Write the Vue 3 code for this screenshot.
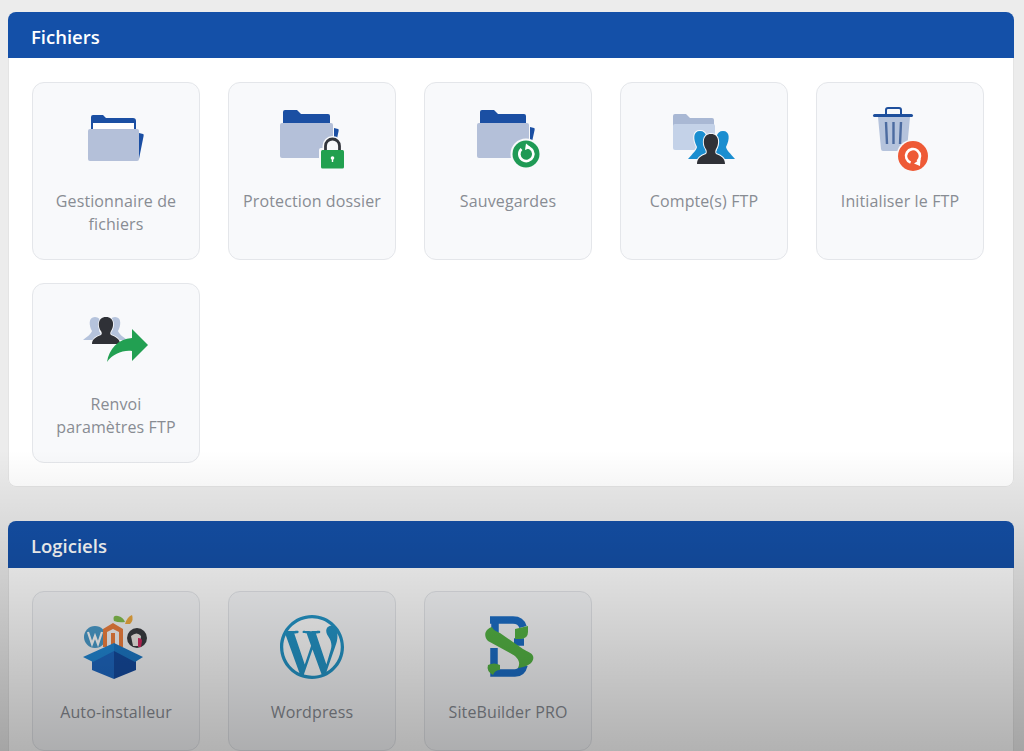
<template>
  <div class="page">
    <section class="panel">
      <h2 class="panel-title">Fichiers</h2>
      <div class="tiles">
        <a class="tile">
          <svg class="icon" viewBox="0 0 80 64">
            <path d="M15 16q0-2 2-2h10l3 3h27q3 0 3 3v12H15z" fill="#1b4fa3" />
            <rect x="17" y="22" width="41" height="8" fill="#fff" />
            <path d="M63 32l4 1q1 0 .6 2L63 58z" fill="#1b4fa3" />
            <rect x="12" y="28" width="51" height="32" rx="2" fill="#b4c0d9" />
          </svg>
          <span class="label">Gestionnaire de fichiers</span>
        </a>
        <a class="tile">
          <svg class="icon" viewBox="0 0 80 64">
            <path d="M11 11q0-2 2-2h12l4 4h27q2 0 2 2v10H11z" fill="#1b4fa3" />
            <path d="M62 27l4 1q1 0 .6 2L62 52z" fill="#1b4fa3" />
            <rect x="8" y="22" width="53" height="35" rx="2" fill="#b4c0d9" />
            <rect x="47" y="47" width="27" height="23" rx="2" fill="#f8f9fb" />
            <path d="M52 49v-4a8 8 0 0 1 17 0v4z" fill="#f8f9fb" stroke="#f8f9fb" stroke-width="3" />
            <path d="M53.500 50v-5a7 7 0 0 1 14 0v5" fill="none" stroke="#33363c" stroke-width="2.800" />
            <rect x="49" y="49" width="23" height="18.500" rx="1.500" fill="#21a04f" />
            <circle cx="60.500" cy="57" r="1.800" fill="#fff" />
            <rect x="59.800" y="57" width="1.400" height="4" fill="#fff" />
          </svg>
          <span class="label">Protection dossier</span>
        </a>
        <a class="tile">
          <svg class="icon" viewBox="0 0 80 64">
            <path d="M12 11q0-2 2-2h12l4 4h26q2 0 2 2v10H12z" fill="#1b4fa3" />
            <path d="M62 26l4 1q1 0 .6 2L62 50z" fill="#1b4fa3" />
            <rect x="9" y="22" width="52" height="35" rx="2" fill="#b4c0d9" />
            <circle cx="58" cy="53" r="15.500" fill="#f8f9fb" />
            <circle cx="58" cy="53" r="13.500" fill="#1f9a55" />
            <path d="M53.500 48a7 7 0 1 0 6-1.800" fill="none" stroke="#fff" stroke-width="2.600" />
            <path d="M58 42.500l5 4-6 2.500z" fill="#fff" />
          </svg>
          <span class="label">Sauvegardes</span>
        </a>
        <a class="tile">
          <svg class="icon" viewBox="0 0 80 64">
            <path d="M9 15q0-2 2-2h11l4 4h22q2 0 2 2v8H9z" fill="#a9b8d4" />
            <rect x="9" y="23" width="42" height="26" rx="2" fill="#c4d2e8" />
            <path d="M24 58C29 52 32 50 33 46 29 38 29 30 36 30 43 30 44 38 41 46L46 58Z" fill="#1a8ed0" stroke="#f8f9fb" stroke-width="2" paint-order="stroke" />
            <path d="M71 58C66 52 63 50 62 46 66 38 66 30 59 30 52 30 51 38 54 46L49 58Z" fill="#1a8ed0" stroke="#f8f9fb" stroke-width="2" paint-order="stroke" />
            <path d="M33 63C33 57 37 55 42 53 43 52 43 50 42 48 39 44 38 33 47 33 56 33 55 44 52 48 51 50 51 52 52 53 57 55 61 57 61 63Z" fill="#2f3137" stroke="#f8f9fb" stroke-width="2" paint-order="stroke" />
          </svg>
          <span class="label">Compte(s) FTP</span>
        </a>
        <a class="tile">
          <svg class="icon" viewBox="0 0 80 64">
            <path d="M18 16l3 32q.2 2 2 2h22q2 0 2-2l3-32z" fill="#b5c3dc" />
            <rect x="13" y="13" width="40" height="3" rx="1.500" fill="#1e4f9c" />
            <path d="M26 13V9q0-2 2-2h11q2 0 2 2v4" fill="none" stroke="#1e4f9c" stroke-width="2" />
            <path d="M26 21l1 22M33.500 21v22M41 21l-1 22" fill="none" stroke="#4c6ba0" stroke-width="2.400" />
            <circle cx="53" cy="55" r="16.500" fill="#f8f9fb" />
            <circle cx="53" cy="55" r="15" fill="#ee5a36" />
            <path d="M50.600 61.600A7 7 0 1 1 57.500 60.400" fill="none" stroke="#fff" stroke-width="2.600" />
            <path d="M60.500 58l-.5 7-6-2.500z" fill="#fff" />
          </svg>
          <span class="label">Initialiser le FTP</span>
        </a>
        <a class="tile tile-tall">
          <svg class="icon" viewBox="0 0 80 64">
            <path d="M7 37C12 33 15 31 16 28 13 23 12 14 19 14 26 14 26 23 23 28L29 37Z" fill="#b5c3dc" />
            <path d="M51 37C46 33 43 31 42 28 45 23 46 14 39 14 32 14 32 23 35 28L29 37Z" fill="#b5c3dc" />
            <path d="M16 41C16 36 20 34 25 32 26 31 26 30 25 28 22 24 21 14 30 14 39 14 38 24 35 28 34 30 34 31 35 32 40 34 44 36 44 41Z" fill="#2f3137" stroke="#f8f9fb" stroke-width="1.500" paint-order="stroke" />
            <path d="M31 59C33 46 42 36 56 35V26L72 42 56 58V48C46 47 37 51 31 59Z" fill="#22a052" />
          </svg>
          <span class="label">Renvoi<br />paramètres FTP</span>
        </a>
      </div>
    </section>

    <section class="panel panel-apps">
      <h2 class="panel-title">Logiciels</h2>
      <div class="tiles">
        <a class="tile tile-app">
          <svg class="icon" viewBox="0 0 80 64">
            <circle cx="19" cy="22" r="11" fill="#4a9ccc" />
            <path d="M12 17l4 12 3-8 3 8 4-12" fill="none" stroke="#fff" stroke-width="2.200" />
            <path d="M27 32V14l10-6 10 6v18h-4V17l-6-3-6 3v15z" fill="#f0803f" />
            <path d="M35 18h4v14h-4z" fill="#f0803f" />
            <path d="M38 6q-2-6 4-5 5 1 7 6-6 1-11-1z" fill="#84c04f" />
            <path d="M49 9q2-7 7-9 2 5-2 9z" fill="#f2ad40" />
            <circle cx="61" cy="23" r="10" fill="#3a3d42" />
            <path d="M55 21q6-5 10 0l-1 10h-7z" fill="#f1ece8" />
            <path d="M62 23q4 0 4 3l-1 6h-3z" fill="#d42a62" />
            <path d="M38 32L16 42V55L38 64Z" fill="#1e68c2" />
            <path d="M38 32L60 42V55L38 64Z" fill="#144a9e" />
            <path d="M38 28L7 42 17 47 38 36Z" fill="#2188d6" />
            <path d="M38 28L67 42 59 47 38 36Z" fill="#1c78c6" />
          </svg>
          <span class="label">Auto-installeur</span>
        </a>
        <a class="tile tile-app">
          <svg class="icon" viewBox="0 0 80 64">
            <g transform="translate(8 0) scale(2.667)">
              <circle cx="12" cy="12" r="11.500" fill="#fff" />
              <path fill="#2496c9" d="M21.469 6.825c.84 1.537 1.318 3.3 1.318 5.175 0 3.979-2.156 7.456-5.363 9.325l3.295-9.527c.615-1.54.82-2.771.82-3.864 0-.405-.026-.78-.07-1.11m-7.981.105c.647-.03 1.232-.105 1.232-.105.582-.075.514-.93-.067-.899 0 0-1.755.135-2.88.135-1.064 0-2.85-.15-2.85-.15-.585-.03-.661.855-.075.885 0 0 .54.061 1.125.09l1.68 4.605-2.37 7.08L5.354 6.9c.649-.03 1.234-.1 1.234-.1.585-.075.516-.93-.065-.896 0 0-1.746.138-2.874.138-.2 0-.438-.008-.69-.015C4.911 3.15 8.235 1.215 12 1.215c2.809 0 5.365 1.072 7.286 2.833-.046-.003-.091-.009-.141-.009-1.06 0-1.812.923-1.812 1.914 0 .89.513 1.643 1.06 2.531.411.72.89 1.643.89 2.977 0 .915-.354 1.994-.821 3.479l-1.075 3.585-3.9-11.61.001.014zM12 22.784c-1.059 0-2.081-.153-3.048-.437l3.237-9.406 3.315 9.087c.024.053.05.101.078.149-1.12.393-2.325.609-3.582.609M1.211 12c0-1.564.336-3.05.935-4.39L7.29 21.709C3.694 19.96 1.212 16.271 1.211 12M12 0C5.385 0 0 5.385 0 12s5.385 12 12 12 12-5.385 12-12S18.615 0 12 0" />
            </g>
          </svg>
          <span class="label">Wordpress</span>
        </a>
        <a class="tile tile-app">
          <svg class="icon" viewBox="0 0 80 64">
            <path d="M22 5H45Q53 5 55 12M27 5V18M26 33V58H47Q54 58 56 50M46 27H56" fill="none" stroke="#1c6fc8" stroke-width="7.500" />
            <path d="M47 14L60 11V17Q60 24 52 24H47Z" fill="#55b545" />
            <path d="M24 12C17 14 15 21 20 26L42 38C50 42 53 47 50 53 60 52 67 47 65 41 64 38 60 37 55 34L32 18C28 16 25 15 24 12Z" fill="#55b545" />
            <path d="M20 50Q26 47 32 50V55Q27 55 25 60 18 56 20 50Z" fill="#55b545" />
          </svg>
          <span class="label">SiteBuilder PRO</span>
        </a>
      </div>
    </section>

    <div class="shade"></div>
  </div>
</template>

<script setup>
</script>

<style>
body {
  background: #ececec;
}
</style>

<style scoped>
.page {
  position: relative;
  height: 751px;
  box-sizing: border-box;
  padding: 12px 10px 0 8px;
  overflow: hidden;
  background: #ececec;
  font-family: "Open Sans", "Liberation Sans", sans-serif;
}

.panel {
  margin-bottom: 34px;
  background: #fff;
  border-radius: 8px;
  box-shadow: 0 0 0 1px #e4e4e4 inset;
}

.panel-title {
  height: 46px;
  margin: 0;
  padding-left: 23px;
  background: #1450a8;
  border-radius: 8px 8px 0 0;
  color: #fff;
  font-size: 18.5px;
  font-weight: 600;
  line-height: 50px;
}

.panel-apps .panel-title {
  height: 47px;
}

.tiles {
  display: grid;
  grid-template-columns: repeat(5, 168px);
  gap: 23px 28px;
  padding: 24px;
}

.panel-apps .tiles {
  padding-top: 23px;
}

.tile {
  display: flex;
  flex-direction: column;
  align-items: center;
  box-sizing: border-box;
  min-height: 178px;
  padding: 18px 10px 0;
  background: #f8f9fb;
  border: 1px solid #e4e6ea;
  border-radius: 12px;
}

.tile-tall {
  min-height: 180px;
  padding-top: 19px;
}

.tile-app {
  min-height: 160px;
  padding-top: 23px;
}

.icon {
  display: block;
  flex: none;
  width: 80px;
  height: 64px;
  overflow: visible;
}

.label {
  margin-top: 25px;
  color: #888c93;
  font-size: 16px;
  letter-spacing: 0.12px;
  line-height: 23px;
  text-align: center;
}

.tile-tall .label {
  margin-top: 25.5px;
}

.tile-app .label {
  margin-top: 21.5px;
}

.shade {
  position: absolute;
  inset: 0;
  background: linear-gradient(to bottom, rgba(0, 0, 0, 0) 450px, rgba(0, 0, 0, 0.3) 751px);
  pointer-events: none;
}
</style>
